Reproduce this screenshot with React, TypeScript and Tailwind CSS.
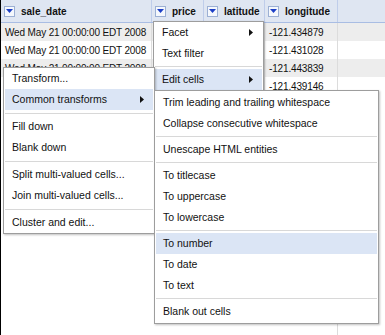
import React from 'react';

const columns = [
  { key: 'sale_date', width: 'w-[151px]' },
  { key: 'price', width: 'w-[52px]' },
  { key: 'latitude', width: 'w-[61px]' },
  { key: 'longitude', width: 'w-[73px]' },
];

// price / latitude cells sit under the open menus, so they stay blank here
const rows = [
  ['Wed May 21 00:00:00 EDT 2008', '', '', '-121.434879'],
  ['Wed May 21 00:00:00 EDT 2008', '', '', '-121.431028'],
  ['Wed May 21 00:00:00 EDT 2008', '', '', '-121.443839'],
  ['', '', '', '-121.439146'],
];

type Item = { label?: string; sep?: boolean; sub?: boolean; active?: boolean };

const columnMenu: Item[] = [
  { label: 'Facet', sub: true },
  { label: 'Text filter' },
  { sep: true },
  { label: 'Edit cells', sub: true, active: true },
];

const editMenu: Item[] = [
  { label: 'Transform...' },
  { label: 'Common transforms', sub: true, active: true },
  { sep: true },
  { label: 'Fill down' },
  { label: 'Blank down' },
  { sep: true },
  { label: 'Split multi-valued cells...' },
  { label: 'Join multi-valued cells...' },
  { sep: true },
  { label: 'Cluster and edit...' },
];

const transformMenu: Item[] = [
  { label: 'Trim leading and trailing whitespace' },
  { label: 'Collapse consecutive whitespace' },
  { sep: true },
  { label: 'Unescape HTML entities' },
  { sep: true },
  { label: 'To titlecase' },
  { label: 'To uppercase' },
  { label: 'To lowercase' },
  { sep: true },
  { label: 'To number', active: true },
  { label: 'To date' },
  { label: 'To text' },
  { sep: true },
  { label: 'Blank out cells' },
];

const DropButton = () => (
  <span className="flex h-[11px] w-[11px] shrink-0 items-center justify-center border border-[#9cb0d4] bg-[#f5f8fd]">
    <svg width="7" height="4" viewBox="0 0 7 4">
      <path d="M0 0h7L3.5 4z" fill="#1d3fc6" />
    </svg>
  </span>
);

const SubArrow = () => (
  <svg width="4" height="7" viewBox="0 0 4 7" className="shrink-0">
    <path d="M0 0l4 3.5L0 7z" fill="#111" />
  </svg>
);

const Menu = ({ items, className, sepClass }: { items: Item[]; className: string; sepClass: string }) => (
  <div
    className={`absolute flex flex-col border border-[#9d9d9d] bg-white shadow-[1px_1px_2px_rgba(0,0,0,0.25)] ${className}`}
  >
    {items.map((item, i) =>
      item.sep ? (
        <div key={i} className={`flex items-center px-[1px] ${sepClass}`}>
          <div className="h-px w-full bg-[#d8d8d8]" />
        </div>
      ) : (
        <div
          key={i}
          className={`mx-[1px] flex h-[21px] items-center justify-between pl-[7px] pr-[9px] ${
            item.active ? 'bg-[#dbe5f5]' : ''
          }`}
        >
          <span>{item.label}</span>
          {item.sub && <SubArrow />}
        </div>
      )
    )}
  </div>
);

export default function App() {
  return (
    <div className="relative h-[335px] w-[385px] overflow-hidden border-l border-black bg-white font-['Liberation_Sans',Arial,sans-serif] text-[10.5px] text-[#111]">
      {/* Header */}
      <div className="flex h-[23px] border-b border-[#a9bde3] bg-[#dfe6f2]">
        {columns.map((col) => (
          <div
            key={col.key}
            className={`flex h-full items-center gap-[6px] border-r border-[#bfcdea] pl-[3px] ${col.width}`}
          >
            <DropButton />
            <span className="text-[10px] font-bold">{col.key}</span>
          </div>
        ))}
      </div>

      {/* Rows */}
      {rows.map((row, r) => (
        <div key={r} className={`flex h-[18px] ${r % 2 === 0 ? 'bg-[#ededed]' : 'bg-white'}`}>
          {row.map((cell, c) => (
            <div
              key={c}
              className={`flex h-full items-center border-r border-[#dcdcdc] pl-[4px] text-[10px] tracking-[-0.15px] ${columns[c].width}`}
            >
              {cell}
            </div>
          ))}
        </div>
      ))}
      <div className="flex h-[240px]">
        <div className="w-[337px] border-r border-[#dcdcdc]" />
      </div>

      {/* Column dropdown */}
      <Menu items={columnMenu} className="left-[152px] top-[21px] h-[70px] w-[111px]" sepClass="h-[5px]" />
      {/* Edit cells submenu */}
      <Menu items={editMenu} className="left-[2px] top-[67px] w-[152px]" sepClass="h-[6px]" />
      {/* Common transforms submenu */}
      <Menu items={transformMenu} className="left-[153px] top-[90px] w-[225px] py-[1px]" sepClass="h-[5px]" />
    </div>
  );
}
